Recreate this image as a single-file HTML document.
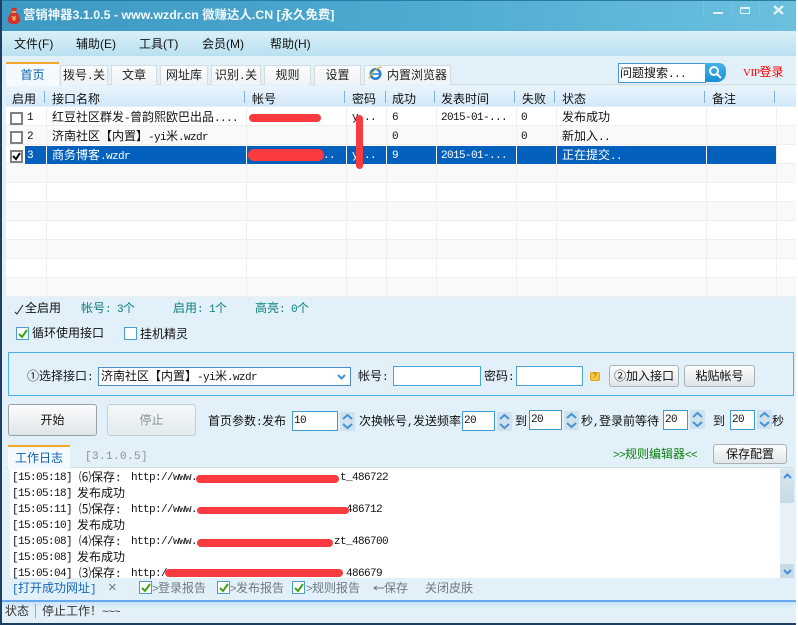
<!DOCTYPE html>
<html><head><meta charset="utf-8"><style>
*{box-sizing:border-box}
html,body{margin:0;padding:0;width:798px;height:625px;overflow:hidden;background:#fff}
body{position:relative;font:12px/14px "Liberation Sans","WenQuanYi Zen Hei","Noto Sans CJK SC",sans-serif;color:#111}
.a,.t{position:absolute}
.t{white-space:nowrap}
.l{font-family:"Liberation Mono",monospace;font-size:11px;letter-spacing:-.6px}
.tab{position:absolute;top:65px;height:20px;background:linear-gradient(#fbfcfc,#eef3f5);border:1px solid #d3dcdf;border-bottom:0;border-radius:2px 2px 0 0;text-align:center;line-height:19px;color:#222}
.hs{position:absolute;top:91px;width:1px;height:12px;background:#7fb2dc}
.h{position:absolute;top:91px;line-height:16px;color:#111;white-space:nowrap}
.row{position:absolute;left:6px;width:790px;height:19px;border-bottom:1px solid #efefef}
.g{background:#f9f9f9}
.v{position:absolute;top:107px;width:1px;height:190px;background:#efefef}
.c{position:absolute;line-height:18px;white-space:nowrap;color:#111}
.c.l,.log.l{margin-top:1px}
.w{color:#fff}
.cb{position:absolute;left:10px;width:13px;height:13px;border:2px solid #808080;background:#fff}
.ck{position:absolute;width:13px;height:13px;border:1px solid #4c9cd0;background:#fff}
.inp{position:absolute;background:#fff;border:1px solid #4ba5d8;padding-left:2px;line-height:17px;color:#111}
.inp.l{line-height:19px}
.btn{position:absolute;border:1px solid #a9b2b6;border-radius:3px;background:linear-gradient(#fcfdfd,#dfe5e8);text-align:center;color:#111}
.sp{position:absolute;width:15px;background:#cfe2ee}
.sp svg{display:block}
.red{position:absolute;background:#f93b3f;border-radius:6px}
.log{position:absolute;left:12px;white-space:nowrap;line-height:16px;color:#111}
.gr{color:#6f7a80}
.tl{color:#0b7f7f}
</style></head><body>
<!-- window -->
<div class="a" style="left:0;top:0;width:796px;height:625px;background:#e1f0f9"></div>
<div class="a" style="left:0;top:0;width:796px;height:31px;background:linear-gradient(90deg,#3d98c2,#4da9d0 50%,#6cc0de);border-top:1px solid #2a7a9e"></div>
<div class="a" style="left:0;top:31px;width:796px;height:25px;background:linear-gradient(#dbf0f8,#b9e0f0)"></div>
<div class="a" style="left:0;top:0;width:2px;height:625px;background:#1c3f63;z-index:9"></div>
<div class="a" style="left:0;top:623px;width:796px;height:2px;background:#1c3f63;z-index:9"></div>
<!-- title -->
<svg class="a" style="left:7px;top:7px" width="14" height="18" viewBox="0 0 14 18"><path d="M4 1h6L8.500 5c3 2 4.500 5 4.500 8 0 3-2.500 4-6 4s-6-1-6-4c0-3 1.500-6 4.500-8z" fill="#d8302a"/><path d="M5 5h4" stroke="#f3c64a" stroke-width="1.500"/><path d="M5 9l2 2 2-2M7 11v3M5 12h4" stroke="#f5d36a" fill="none"/></svg>
<div class="t" style="left:23px;top:7px;font-size:12.400px;line-height:16px;color:#f1f9fc;font-weight:bold">营销神器3.1.0.5 - www.wzdr.cn 微赚达人.CN [永久免费]</div>
<div class="a" style="left:703px;top:1px;width:1px;height:17px;background:#7cc0da"></div>
<div class="a" style="left:731px;top:1px;width:1px;height:17px;background:#7cc0da"></div>
<div class="a" style="left:759px;top:1px;width:1px;height:17px;background:#7cc0da"></div>
<div class="a" style="left:713px;top:12px;width:10px;height:2px;background:#dff1f8"></div>
<div class="a" style="left:740px;top:7px;width:10px;height:7px;border:1px solid #dff1f8;border-top-width:2px"></div>
<svg class="a" style="left:773px;top:5px" width="11" height="10"><path d="M1 1l9 8M10 1l-9 8" stroke="#e6f4fa" stroke-width="2.200"/></svg>
<!-- menu -->
<div class="t" style="left:14px;top:37px">文件(F)</div>
<div class="t" style="left:76px;top:37px">辅助(E)</div>
<div class="t" style="left:139px;top:37px">工具(T)</div>
<div class="t" style="left:202px;top:37px">会员(M)</div>
<div class="t" style="left:270px;top:37px">帮助(H)</div>
<!-- tabs -->
<div class="a" style="left:6px;top:84px;width:790px;height:1px;background:#d3dcdf"></div>
<div class="a" style="left:6px;top:62px;width:53px;height:24px;background:#f4fafd;border-top:2px solid #f0a92c;text-align:center;line-height:23px;color:#0a5fb4;z-index:2">首页</div>
<div class="tab" style="left:60px;width:48px">拨号<span class="l">.</span>关</div>
<div class="tab" style="left:111px;width:46px">文章</div>
<div class="tab" style="left:160px;width:48px">网址库</div>
<div class="tab" style="left:211px;width:50px">识别<span class="l">.</span>关</div>
<div class="tab" style="left:264px;width:47px">规则</div>
<div class="tab" style="left:314px;width:47px">设置</div>
<div class="tab" style="left:364px;width:87px;text-align:left;padding-left:22px">内置浏览器</div>
<svg class="a" style="left:368px;top:66px" width="15" height="15" viewBox="0 0 15 15"><ellipse cx="7.500" cy="8" rx="4.800" ry="4.800" fill="none" stroke="#2a7fd0" stroke-width="2.400"/><path d="M3 8h9" stroke="#2a7fd0" stroke-width="1.500"/><path d="M1 13C2 8 8 2 14 1 11 1 4 4 1 13z" fill="#e8b53a" stroke="#e8b53a"/></svg>
<!-- search -->
<div class="a" style="left:618px;top:63px;width:88px;height:20px;background:#fff;border:1px solid #3f9bd1;line-height:18px;padding-left:1px">问题搜索<span class="l">...</span></div>
<div class="a" style="left:705px;top:63px;width:21px;height:19px;background:linear-gradient(#44b3ec,#1a8ed6);border-radius:0 7px 9px 0"></div>
<svg class="a" style="left:707px;top:65px" width="16" height="15"><circle cx="7" cy="6" r="4" fill="none" stroke="#fff" stroke-width="2"/><path d="M10 9l4 4" stroke="#fff" stroke-width="2"/></svg>
<div class="t" style="left:743px;top:65px;color:#f00;font-family:'Liberation Serif','WenQuanYi Zen Hei','Noto Sans CJK SC',serif"><span style="font-size:11px;letter-spacing:-.4px">VIP</span>登录</div>
<!-- header -->
<div class="a" style="left:6px;top:86px;width:790px;height:20px;background:linear-gradient(#eaf5fc,#d2e8f9)"></div>
<div class="h" style="left:12px">启用</div><div class="hs" style="left:44px"></div>
<div class="h" style="left:52px">接口名称</div><div class="hs" style="left:244px"></div>
<div class="h" style="left:252px">帐号</div><div class="hs" style="left:344px"></div>
<div class="h" style="left:352px">密码</div><div class="hs" style="left:385px"></div>
<div class="h" style="left:392px">成功</div><div class="hs" style="left:434px"></div>
<div class="h" style="left:441px">发表时间</div><div class="hs" style="left:514px"></div>
<div class="h" style="left:522px">失败</div><div class="hs" style="left:554px"></div>
<div class="h" style="left:562px">状态</div><div class="hs" style="left:704px"></div>
<div class="h" style="left:712px">备注</div><div class="hs" style="left:774px"></div>
<!-- rows -->
<div class="a" style="left:6px;top:107px;width:790px;height:190px;background:#fff"></div>
<div class="row" style="top:107px"></div>
<div class="row g" style="top:126px"></div>
<div class="row" style="top:145px"></div>
<div class="row g" style="top:164px"></div>
<div class="row" style="top:183px"></div>
<div class="row g" style="top:202px"></div>
<div class="row" style="top:221px"></div>
<div class="row g" style="top:240px"></div>
<div class="row" style="top:259px"></div>
<div class="row g" style="top:278px"></div>
<div class="v" style="left:46px"></div><div class="v" style="left:246px"></div><div class="v" style="left:346px"></div><div class="v" style="left:386px"></div><div class="v" style="left:436px"></div><div class="v" style="left:516px"></div><div class="v" style="left:556px"></div><div class="v" style="left:706px"></div><div class="v" style="left:776px"></div>
<div class="a" style="left:25px;top:146px;width:751px;height:18px;background:#0360bd"></div>
<div class="a" style="left:46px;top:146px;width:1px;height:18px;background:#fff"></div><div class="a" style="left:246px;top:146px;width:1px;height:18px;background:#fff"></div><div class="a" style="left:346px;top:146px;width:1px;height:18px;background:#fff"></div><div class="a" style="left:386px;top:146px;width:1px;height:18px;background:#fff"></div><div class="a" style="left:436px;top:146px;width:1px;height:18px;background:#fff"></div><div class="a" style="left:516px;top:146px;width:1px;height:18px;background:#fff"></div><div class="a" style="left:556px;top:146px;width:1px;height:18px;background:#fff"></div><div class="a" style="left:706px;top:146px;width:1px;height:18px;background:#fff"></div>
<div class="cb" style="top:112px"></div><div class="cb" style="top:131px"></div><div class="cb" style="top:150px"></div>
<svg class="a" style="left:12px;top:152px" width="9" height="9"><path d="M1 4l3 3 4-6" fill="none" stroke="#000" stroke-width="2"/></svg>
<div class="c l" style="left:27px;top:108px">1</div>
<div class="c l" style="left:27px;top:127px">2</div>
<div class="c w l" style="left:27px;top:146px">3</div>
<div class="c" style="left:52px;top:108px">红豆社区群发<span class="l">-</span>曾韵熙欧巴出品<span class="l">....</span></div>
<div class="c" style="left:52px;top:127px">济南社区【内置】<span class="l">-yi</span>米<span class="l">.wzdr</span></div>
<div class="c w" style="left:52px;top:146px">商务博客<span class="l">.wzdr</span></div>
<div class="c l" style="left:352px;top:108px">y...</div>
<div class="c w l" style="left:352px;top:146px">y...</div>
<div class="c w l" style="left:323px;top:146px">..</div>
<div class="c l" style="left:392px;top:108px">6</div><div class="c l" style="left:392px;top:127px">0</div><div class="c w l" style="left:392px;top:146px">9</div>
<div class="c l" style="left:441px;top:108px">2015-01-...</div>
<div class="c l w" style="left:441px;top:146px">2015-01-...</div>
<div class="c l" style="left:521px;top:108px">0</div><div class="c l" style="left:521px;top:127px">0</div>
<div class="c" style="left:562px;top:108px">发布成功</div>
<div class="c" style="left:562px;top:127px">新加入<span class="l">..</span></div>
<div class="c w" style="left:562px;top:146px">正在提交<span class="l">..</span></div>
<!-- redactions -->
<div class="red" style="left:249px;top:114px;width:72px;height:8px"></div>
<div class="red" style="left:248px;top:149px;width:76px;height:12px"></div>
<div class="red" style="left:356px;top:115px;width:7px;height:54px"></div>
<!-- counters -->
<svg class="a" style="left:14px;top:304px" width="11" height="11"><path d="M1 8l2 2 6-9" fill="none" stroke="#222"/></svg>
<div class="t" style="left:25px;top:301px">全启用</div>
<div class="t tl" style="left:81px;top:301px">帐号<span class="l">: 3</span>个</div>
<div class="t tl" style="left:173px;top:301px">启用<span class="l">: 1</span>个</div>
<div class="t tl" style="left:255px;top:301px">高亮<span class="l">: 0</span>个</div>
<!-- checks -->
<div class="ck" style="left:16px;top:327px"></div>
<svg class="a" style="left:17px;top:328px" width="12" height="12"><path d="M2 6l3 3 5-7" fill="none" stroke="#3ea416" stroke-width="2"/></svg>
<div class="t" style="left:32px;top:326px">循环使用接口</div>
<div class="ck" style="left:124px;top:327px"></div>
<div class="t" style="left:140px;top:327px">挂机精灵</div>
<!-- group -->
<div class="a" style="left:8px;top:352px;width:786px;height:44px;border:1px solid #4bb0e2"></div>
<div class="t" style="left:27px;top:369px">①选择接口<span class="l">:</span></div>
<div class="inp" style="left:98px;top:367px;width:253px;height:19px;border-color:#4b8fc9">济南社区【内置】<span class="l">-yi</span>米<span class="l">.wzdr</span></div>
<svg class="a" style="left:336px;top:373px" width="11" height="8"><path d="M2 2l3.500 3.500L9 2" fill="none" stroke="#3f8fd6" stroke-width="2"/></svg>
<div class="t" style="left:358px;top:369px">帐号<span class="l">:</span></div>
<div class="inp" style="left:393px;top:366px;width:88px;height:20px"></div>
<div class="t" style="left:484px;top:369px">密码<span class="l">:</span></div>
<div class="inp" style="left:516px;top:366px;width:67px;height:20px"></div>
<div class="a" style="left:590px;top:372px;width:10px;height:9px;background:#f8c640;border:1px solid #e3a11f;border-radius:2px;font-size:7px;line-height:8px;text-align:center;color:#a06a00">?</div>
<div class="btn" style="left:609px;top:365px;width:70px;height:22px;line-height:20px">②加入接口</div>
<div class="btn" style="left:684px;top:365px;width:71px;height:22px;line-height:20px">粘贴帐号</div>
<!-- start/stop -->
<div class="btn" style="left:8px;top:404px;width:89px;height:32px;line-height:30px;border-color:#98a2a6">开始</div>
<div class="btn" style="left:107px;top:404px;width:89px;height:32px;line-height:30px;color:#8a9296;border-color:#c6d0d4;background:linear-gradient(#f3f7f8,#e3ebee)">停止</div>
<div class="t" style="left:208px;top:414px">首页参数<span class="l">:</span>发布</div>
<div class="inp l" style="left:292px;top:411px;width:46px;height:20px;border-color:#3f9bd1;padding-left:1px">10</div>
<div class="sp" style="left:340px;top:412px;height:19px"><svg width="15" height="19"><path d="M3 7l4.500-4L12 7M3 12l4.500 4L12 12" fill="none" stroke="#4793d8" stroke-width="2"/></svg></div>
<div class="t" style="left:359px;top:414px">次换帐号<span class="l">,</span>发送频率</div>
<div class="inp l" style="left:462px;top:411px;width:33px;height:20px;border-color:#3f9bd1;padding-left:1px">20</div>
<div class="sp" style="left:497px;top:412px;height:19px"><svg width="15" height="19"><path d="M3 7l4.500-4L12 7M3 12l4.500 4L12 12" fill="none" stroke="#4793d8" stroke-width="2"/></svg></div>
<div class="t" style="left:515px;top:414px">到</div>
<div class="inp l" style="left:529px;top:410px;width:33px;height:20px;border-color:#3f9bd1;padding-left:1px">20</div>
<div class="sp" style="left:564px;top:411px;height:19px"><svg width="15" height="19"><path d="M3 7l4.500-4L12 7M3 12l4.500 4L12 12" fill="none" stroke="#4793d8" stroke-width="2"/></svg></div>
<div class="t" style="left:581px;top:414px">秒<span class="l">,</span>登录前等待</div>
<div class="inp l" style="left:663px;top:410px;width:25px;height:20px;border-color:#3f9bd1;padding-left:1px">20</div>
<div class="sp" style="left:690px;top:410px;height:19px"><svg width="15" height="19"><path d="M3 7l4.500-4L12 7M3 12l4.500 4L12 12" fill="none" stroke="#4793d8" stroke-width="2"/></svg></div>
<div class="t" style="left:713px;top:414px">到</div>
<div class="inp l" style="left:730px;top:410px;width:25px;height:20px;border-color:#3f9bd1;padding-left:1px">20</div>
<div class="sp" style="left:757px;top:410px;height:19px"><svg width="15" height="19"><path d="M3 7l4.500-4L12 7M3 12l4.500 4L12 12" fill="none" stroke="#4793d8" stroke-width="2"/></svg></div>
<div class="t" style="left:772px;top:414px">秒</div>
<!-- log tabs -->
<div class="a" style="left:6px;top:467px;width:788px;height:1px;background:#cfdde4"></div>
<div class="a" style="left:8px;top:445px;width:62px;height:24px;background:#f4fafd;border-top:2px solid #f0a92c;text-align:center;line-height:23px;color:#0a5fb4;z-index:2">工作日志</div>
<div class="t l" style="left:85px;top:450px;color:#8a8f92;letter-spacing:.4px">[3.1.0.5]</div>
<div class="t" style="left:613px;top:447px;color:#0a800a"><span class="l">&gt;&gt;</span>规则编辑器<span class="l">&lt;&lt;</span></div>
<div class="btn" style="left:713px;top:444px;width:74px;height:20px;line-height:18px">保存配置</div>
<!-- log -->
<div class="a" style="left:10px;top:468px;width:770px;height:110px;background:#fff"></div>
<div class="a" style="left:780px;top:469px;width:14px;height:109px;background:#e8f1f5"></div>
<div class="a" style="left:780px;top:469px;width:14px;height:34px;background:linear-gradient(#d8e6ee,#c6dbe7)"></div>
<div class="a" style="left:780px;top:564px;width:14px;height:14px;background:#c6dbe7"></div>
<svg class="a" style="left:782px;top:473px" width="11" height="7"><path d="M2 5l3.500-3.500L9 5" fill="none" stroke="#3f8fd6" stroke-width="2"/></svg>
<svg class="a" style="left:782px;top:568px" width="11" height="7"><path d="M2 2l3.500 3.500L9 2" fill="none" stroke="#3f8fd6" stroke-width="2"/></svg>
<div class="log l" style="top:469px">[15:05:18]</div><div class="log" style="left:79px;top:469px">⑹保存<span class="l">:</span></div><div class="log l" style="left:131px;top:469px">http://www.</div><div class="log l" style="left:340px;top:469px">t_486722</div>
<div class="log l" style="top:485px">[15:05:18]</div><div class="log" style="left:77px;top:485px">发布成功</div>
<div class="log l" style="top:501px">[15:05:11]</div><div class="log" style="left:79px;top:501px">⑸保存<span class="l">:</span></div><div class="log l" style="left:131px;top:501px">http://www.</div><div class="log l" style="left:346px;top:501px">486712</div>
<div class="log l" style="top:517px">[15:05:10]</div><div class="log" style="left:77px;top:517px">发布成功</div>
<div class="log l" style="top:533px">[15:05:08]</div><div class="log" style="left:79px;top:533px">⑷保存<span class="l">:</span></div><div class="log l" style="left:131px;top:533px">http://www.</div><div class="log l" style="left:334px;top:533px">zt_486700</div>
<div class="log l" style="top:549px">[15:05:08]</div><div class="log" style="left:77px;top:549px">发布成功</div>
<div class="log l" style="top:565px;height:13px;overflow:hidden">[15:05:04]</div><div class="log" style="left:79px;top:565px;height:13px;overflow:hidden">⑶保存<span class="l">:</span></div><div class="log l" style="left:131px;top:565px;height:13px;overflow:hidden">http:/</div><div class="log l" style="left:346px;top:565px;height:13px;overflow:hidden">486679</div>
<div class="red" style="left:196px;top:475px;width:143px;height:8px"></div>
<div class="red" style="left:197px;top:507px;width:152px;height:7px"></div>
<div class="red" style="left:197px;top:539px;width:136px;height:8px"></div>
<div class="red" style="left:165px;top:569px;width:178px;height:8px"></div>
<!-- bottom -->
<div class="t" style="left:12px;top:581px;color:#1666b8"><span class="l">[</span>打开成功网址<span class="l">]</span></div>
<div class="t gr" style="left:108px;top:581px;font-size:15px">×</div>
<div class="ck" style="left:139px;top:581px"></div><svg class="a" style="left:140px;top:582px" width="12" height="12"><path d="M2 6l3 3 5-7" fill="none" stroke="#3ea416" stroke-width="2"/></svg>
<div class="t gr" style="left:152px;top:581px"><span class="l">&gt;</span>登录报告</div>
<div class="ck" style="left:217px;top:581px"></div><svg class="a" style="left:218px;top:582px" width="12" height="12"><path d="M2 6l3 3 5-7" fill="none" stroke="#3ea416" stroke-width="2"/></svg>
<div class="t gr" style="left:230px;top:581px"><span class="l">&gt;</span>发布报告</div>
<div class="ck" style="left:292px;top:581px"></div><svg class="a" style="left:293px;top:582px" width="12" height="12"><path d="M2 6l3 3 5-7" fill="none" stroke="#3ea416" stroke-width="2"/></svg>
<div class="t gr" style="left:306px;top:581px"><span class="l">&gt;</span>规则报告</div>
<svg class="a" style="left:372px;top:585px" width="12" height="7"><path d="M12 3H2M5 1L2 3l3 2" fill="none" stroke="#6f7a80"/></svg>
<div class="t gr" style="left:384px;top:581px">保存</div>
<div class="t gr" style="left:425px;top:581px">关闭皮肤</div>
<!-- status -->
<div class="a" style="left:2px;top:600px;width:794px;height:2px;background:#65a8ee"></div>
<div class="a" style="left:2px;top:602px;width:794px;height:6px;background:linear-gradient(#c9e2f7,#e1f0f9)"></div>
<div class="t" style="left:5px;top:604px;color:#333">状态</div>
<div class="a" style="left:35px;top:604px;width:1px;height:14px;background:#9ab"></div>
<div class="t" style="left:42px;top:604px;color:#333">停止工作！<span class="l">~~~</span></div>
</body></html>
